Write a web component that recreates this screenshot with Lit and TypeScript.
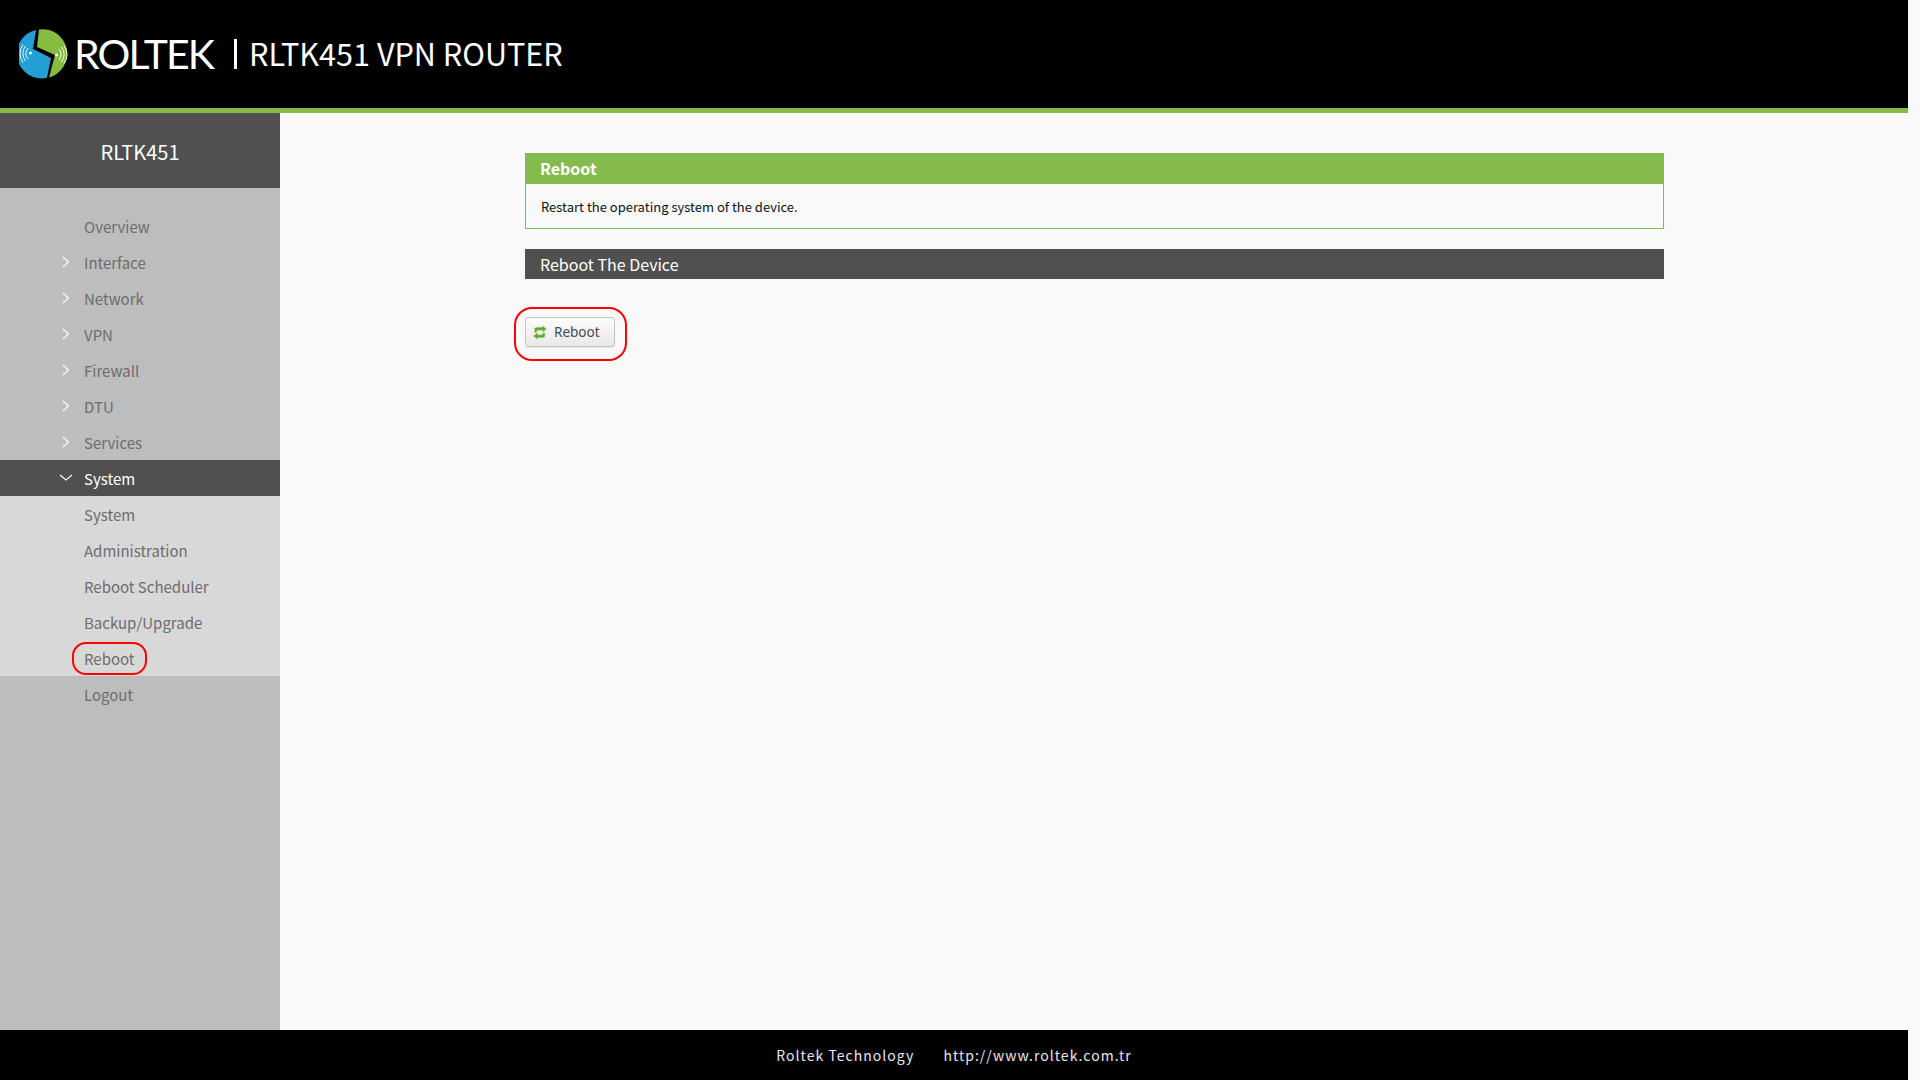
import { LitElement, html, css, svg } from "lit";
import { customElement } from "lit/decorators.js";

const chevRight = svg`<svg class="chev" width="8" height="12" viewBox="0 0 8 12"><path d="M1 1l5.500 5L1 11" fill="none" stroke="#fff" stroke-width="1.1"/></svg>`;
const chevDown = svg`<svg class="chev down" width="14" height="8" viewBox="0 0 14 8"><path d="M1 1l6 5 6-5" fill="none" stroke="#fff" stroke-width="1.1"/></svg>`;

@customElement("app-root")
export class AppRoot extends LitElement {
  static styles = css`
    :host { display: block; background: #f9f9f9; height: 1080px; font-family: "Noto Sans CJK SC", "Noto Sans", sans-serif; }
    * { box-sizing: border-box; }
    .page { width: 1908px; height: 1080px; display: flex; flex-direction: column; }
    header { height: 113px; flex: none; background: #000; border-bottom: 5px solid #85bb4d; display: flex; align-items: flex-start; color: #fff; }
    .logo { margin: 29px 0 0 19px; display: block; flex: none; }
    .brand { font-family: "Lato", sans-serif; font-weight: 400; font-size: 41px; line-height: 50px; margin: 29px 0 0 5px; letter-spacing: -1.9px; }
    .sep { width: 3px; height: 30px; background: #fff; margin: 39px 0 0 21px; flex: none; }
    .model { font-size: 30.6px; font-weight: 400; line-height: 40px; margin: 33px 0 0 12px; white-space: nowrap; }
    .mid { flex: 1; display: flex; min-height: 0; }
    aside { width: 280px; flex: none; background: #bdbdbd; }
    .device { height: 75px; padding-top: 2px; background: #505050; color: #fff; font-size: 20px; display: flex; align-items: center; justify-content: center; margin-bottom: 20px; }
    .row { height: 36px; display: flex; align-items: center; padding-left: 84px; position: relative; font-size: 15px; color: #6d6d6d; }
    .row .chev { position: absolute; left: 62px; top: 12px; }
    .row .chev.down { left: 59px; top: 14px; }
    .row.active { background: #505050; color: #fff; }
    .sub { background: #d8d8d8; }
    .ring { position: absolute; border: 2px solid #f00; pointer-events: none; }
    .ring.nav { left: 72px; top: 2px; width: 75px; height: 33px; border-radius: 14px; }
    main { flex: 1; padding: 40px 244px 0 245px; }
    .panel { border: 1px solid #85bb4d; height: 76px; }
    .panel h3 { margin: 0; height: 30px; background: #85bb4d; color: #fff; font-size: 16px; font-weight: 700; line-height: 28px; padding-left: 14px; }
    .panel p { margin: 0; font-size: 13px; line-height: 45px; height: 45px; padding-left: 15px; color: #111; }
    .bar { margin-top: 20px; height: 30px; background: #505050; color: #fff; font-size: 16px; line-height: 30px; padding-left: 15px; }
    .action { position: relative; margin-top: 38px; width: 90px; }
    .btn { width: 90px; height: 30px; border: 1px solid #c4c4c4; border-radius: 3px; background: linear-gradient(#fcfcfc, #e8e8e8); display: flex; align-items: center; padding: 0 0 0 7px; gap: 7px; font-family: "Noto Sans", sans-serif; font-size: 13.5px; color: #404b5c; box-shadow: 0 1px 1px rgba(0,0,0,.08); }
    .ring.big { left: -11px; top: -10px; width: 113px; height: 54px; border-radius: 18px; }
    footer { height: 50px; flex: none; background: #000; color: #e8e8e8; display: flex; justify-content: center; align-items: center; gap: 29px; font-size: 14px; letter-spacing: 1.03px; }
  `;

  render() {
    const top = ["Interface", "Network", "VPN", "Firewall", "DTU", "Services"];
    const sub = ["System", "Administration", "Reboot Scheduler", "Backup/Upgrade"];
    return html`
      <div class="page">
        <header>
          <svg class="logo" width="50" height="50" viewBox="0 0 50 50">
            <circle cx="24.500" cy="24.500" r="24.500" fill="#000"/>
            <path d="M17 .9A24.500 24.500 0 0 0 28 48.800L32 29 14 20Z" fill="#22a0d6"/>
            <path d="M20 .5A24.500 24.500 0 0 1 30 48.400L36 26 18 18Z" fill="#86bd41"/>
            <g fill="none" stroke="#fff" stroke-width=".9">
              <path d="M9 19a9 9 0 0 0 0 11M6.500 17a12 12 0 0 0 0 15M4 15.500a15 15 0 0 0 0 18"/>
              <path d="M40 20a9 9 0 0 1 0 11M42.500 18a12 12 0 0 1 0 15M45 16.500a15 15 0 0 1 0 18"/>
            </g>
            <circle cx="11.500" cy="24" r="1.500" fill="#fff"/>
            <circle cx="37.500" cy="26" r="1.500" fill="#fff"/>
          </svg>
          <div class="brand">ROLTEK</div>
          <div class="sep"></div>
          <div class="model">RLTK451 VPN ROUTER</div>
        </header>
        <div class="mid">
          <aside>
            <div class="device">RLTK451</div>
            <div class="row">Overview</div>
            ${top.map((t) => html`<div class="row">${chevRight}${t}</div>`)}
            <div class="row active">${chevDown}System</div>
            <div class="sub">
              ${sub.map((t) => html`<div class="row">${t}</div>`)}
              <div class="row">Reboot<span class="ring nav"></span></div>
            </div>
            <div class="row">Logout</div>
          </aside>
          <main>
            <section class="panel">
              <h3>Reboot</h3>
              <p>Restart the operating system of the device.</p>
            </section>
            <div class="bar">Reboot The Device</div>
            <div class="action">
              <div class="btn">
                <svg width="14" height="15" viewBox="0 0 14 15">
                  <path d="M1.500 7.500V4.500C1.500 3 2.500 2.200 4 2.200H9.500V.5L13.500 4 9.500 7.200V5.200H5C4.200 5.200 3.800 5.700 3.800 6.500V7.500Z" fill="#5da82f" stroke="#b5d98c" stroke-width=".6"/>
                  <path d="M12 8V10.500C12 12 11 12.700 9.500 12.700H4.500V14.500L.5 11 4.500 7.800V9.800H8.500C9.300 9.800 9.700 9.300 9.700 8.500V8Z" fill="#5da82f" stroke="#b5d98c" stroke-width=".6"/>
                </svg>
                <span>Reboot</span>
              </div>
              <span class="ring big"></span>
            </div>
          </main>
        </div>
        <footer><span>Roltek Technology</span><span>http://www.roltek.com.tr</span></footer>
      </div>
    `;
  }
}
